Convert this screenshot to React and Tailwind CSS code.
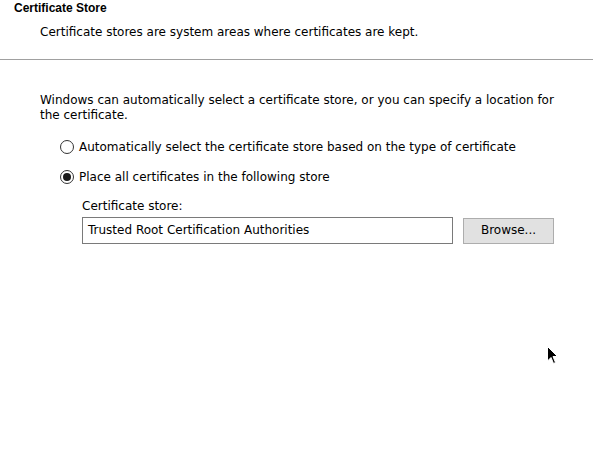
import React from "react";

const Radio = ({ checked, label }) => (
  <label className="flex items-center gap-[5px] h-[14px]">
    <span className="w-[14px] h-[14px] rounded-full border border-[#333] bg-white flex items-center justify-center shrink-0">
      {checked && <span className="w-[8px] h-[8px] rounded-full bg-[#1a1a1a]" />}
    </span>
    <span>{label}</span>
  </label>
);

const Cursor = () => (
  <svg width="12" height="19" viewBox="0 0 12 19" className="absolute left-[547px] top-[346px]">
    <path d="M0.5 0.5 L0.5 15 L4 11.5 L6.5 17.5 L8.5 16.5 L6 10.5 L10.5 10.5 Z" fill="#000" stroke="#fff" strokeWidth="1" />
  </svg>
);

export default function App() {
  return (
    <div
      className="relative w-[595px] h-[449px] bg-white text-[12px] leading-[15px] text-black overflow-hidden"
      style={{ fontFamily: '"DejaVu Sans", Verdana, sans-serif' }}
    >
      <div
        className="pl-[14px] pt-[1px] font-bold text-black"
        style={{ fontFamily: '"Liberation Sans", Arial, sans-serif' }}
      >
        Certificate Store
      </div>
      <div className="pl-[40px] pt-[9px]">Certificate stores are system areas where certificates are kept.</div>

      <div className="mt-[19px] h-[2px] w-[593px] border-t border-[#a0a0a0] border-b border-b-white" />

      <div className="pl-[40px] pt-[32px] pr-[20px]">
        <p>
          Windows can automatically select a certificate store, or you can specify a location for
          <br />
          the certificate.
        </p>

        <div className="pl-[20px] mt-[17px] flex flex-col gap-[16px]">
          <Radio label="Automatically select the certificate store based on the type of certificate" />
          <Radio checked label="Place all certificates in the following store" />
        </div>

        <div className="pl-[42px] mt-[15px]">
          <div>Certificate store:</div>
          <div className="mt-[3px] flex items-center gap-[10px]">
            <div className="w-[371px] h-[27px] border border-[#7a7a7a] flex items-center px-[5px]">
              Trusted Root Certification Authorities
            </div>
            <button className="w-[91px] h-[26px] bg-[#e1e1e1] border border-[#adadad] text-[12px]">
              Browse...
            </button>
          </div>
        </div>
      </div>

      <Cursor />
    </div>
  );
}
